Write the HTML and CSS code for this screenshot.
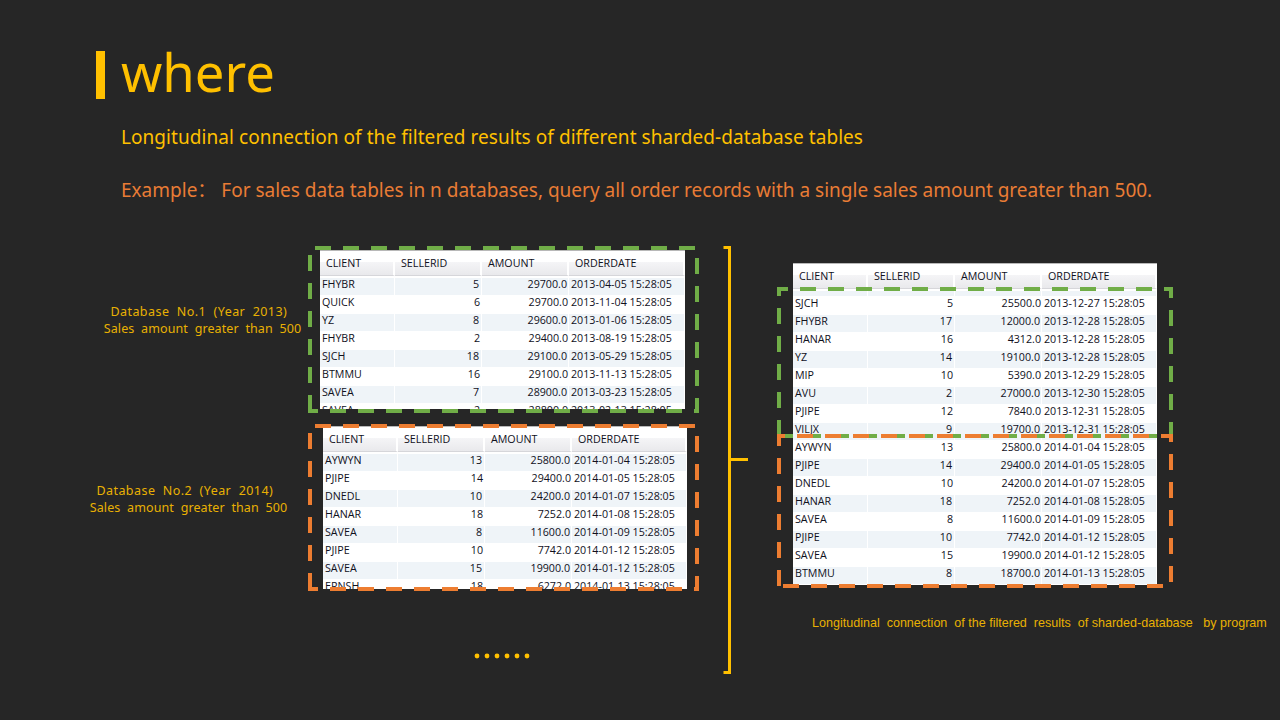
FILE: index.html
```html
<!DOCTYPE html>
<html lang="en">
<head>
<meta charset="utf-8">
<title>where</title>
<link rel="stylesheet" href="styles.css">
</head>
<body>
<main class="slide">
  <header class="head">
    <span class="head-bar"></span>
    <h1 class="title">where</h1>
  </header>
  <p class="sub">Longitudinal connection of the filtered results of different sharded-database tables</p>
  <p class="example">Example：&nbsp;For sales data tables in n databases, query all order records with a single sales amount greater than 500.</p>

  <p class="label label-a">Database&nbsp; No.1&nbsp; (Year&nbsp; 2013)&nbsp;&nbsp;<br>Sales&nbsp; amount&nbsp; greater&nbsp; than&nbsp; 500</p>
  <p class="label label-b">Database&nbsp; No.2&nbsp; (Year&nbsp; 2014)&nbsp;&nbsp;<br>Sales&nbsp; amount&nbsp; greater&nbsp; than&nbsp; 500</p>

  <section class="tbl tbl-a">
    <div class="row hdr"><span>CLIENT</span><span>SELLERID</span><span>AMOUNT</span><span>ORDERDATE</span></div>
    <div class="row"><span>FHYBR</span><span>5</span><span>29700.0</span><span>2013-04-05 15:28:05</span></div>
    <div class="row"><span>QUICK</span><span>6</span><span>29700.0</span><span>2013-11-04 15:28:05</span></div>
    <div class="row"><span>YZ</span><span>8</span><span>29600.0</span><span>2013-01-06 15:28:05</span></div>
    <div class="row"><span>FHYBR</span><span>2</span><span>29400.0</span><span>2013-08-19 15:28:05</span></div>
    <div class="row"><span>SJCH</span><span>18</span><span>29100.0</span><span>2013-05-29 15:28:05</span></div>
    <div class="row"><span>BTMMU</span><span>16</span><span>29100.0</span><span>2013-11-13 15:28:05</span></div>
    <div class="row"><span>SAVEA</span><span>7</span><span>28900.0</span><span>2013-03-23 15:28:05</span></div>
    <div class="row"><span>SAVEA</span><span>2</span><span>28800.0</span><span>2013-02-13 15:28:05</span></div>
  </section>

  <section class="tbl tbl-b">
    <div class="row hdr"><span>CLIENT</span><span>SELLERID</span><span>AMOUNT</span><span>ORDERDATE</span></div>
    <div class="row"><span>AYWYN</span><span>13</span><span>25800.0</span><span>2014-01-04 15:28:05</span></div>
    <div class="row"><span>PJIPE</span><span>14</span><span>29400.0</span><span>2014-01-05 15:28:05</span></div>
    <div class="row"><span>DNEDL</span><span>10</span><span>24200.0</span><span>2014-01-07 15:28:05</span></div>
    <div class="row"><span>HANAR</span><span>18</span><span>7252.0</span><span>2014-01-08 15:28:05</span></div>
    <div class="row"><span>SAVEA</span><span>8</span><span>11600.0</span><span>2014-01-09 15:28:05</span></div>
    <div class="row"><span>PJIPE</span><span>10</span><span>7742.0</span><span>2014-01-12 15:28:05</span></div>
    <div class="row"><span>SAVEA</span><span>15</span><span>19900.0</span><span>2014-01-12 15:28:05</span></div>
    <div class="row"><span>ERNSH</span><span>18</span><span>6272.0</span><span>2014-01-13 15:28:05</span></div>
  </section>

  <section class="tbl tbl-c">
    <div class="row hdr"><span>CLIENT</span><span>SELLERID</span><span>AMOUNT</span><span>ORDERDATE</span></div>
    <div class="row spacer"><span></span><span></span><span></span><span></span></div>
    <div class="row"><span>SJCH</span><span>5</span><span>25500.0</span><span>2013-12-27 15:28:05</span></div>
    <div class="row"><span>FHYBR</span><span>17</span><span>12000.0</span><span>2013-12-28 15:28:05</span></div>
    <div class="row"><span>HANAR</span><span>16</span><span>4312.0</span><span>2013-12-28 15:28:05</span></div>
    <div class="row"><span>YZ</span><span>14</span><span>19100.0</span><span>2013-12-28 15:28:05</span></div>
    <div class="row"><span>MIP</span><span>10</span><span>5390.0</span><span>2013-12-29 15:28:05</span></div>
    <div class="row"><span>AVU</span><span>2</span><span>27000.0</span><span>2013-12-30 15:28:05</span></div>
    <div class="row"><span>PJIPE</span><span>12</span><span>7840.0</span><span>2013-12-31 15:28:05</span></div>
    <div class="row"><span>VILJX</span><span>9</span><span>19700.0</span><span>2013-12-31 15:28:05</span></div>
    <div class="row"><span>AYWYN</span><span>13</span><span>25800.0</span><span>2014-01-04 15:28:05</span></div>
    <div class="row"><span>PJIPE</span><span>14</span><span>29400.0</span><span>2014-01-05 15:28:05</span></div>
    <div class="row"><span>DNEDL</span><span>10</span><span>24200.0</span><span>2014-01-07 15:28:05</span></div>
    <div class="row"><span>HANAR</span><span>18</span><span>7252.0</span><span>2014-01-08 15:28:05</span></div>
    <div class="row"><span>SAVEA</span><span>8</span><span>11600.0</span><span>2014-01-09 15:28:05</span></div>
    <div class="row"><span>PJIPE</span><span>10</span><span>7742.0</span><span>2014-01-12 15:28:05</span></div>
    <div class="row"><span>SAVEA</span><span>15</span><span>19900.0</span><span>2014-01-12 15:28:05</span></div>
    <div class="row"><span>BTMMU</span><span>8</span><span>18700.0</span><span>2014-01-13 15:28:05</span></div>
  </section>

  <svg class="overlay" width="1280" height="720" viewBox="0 0 1280 720" aria-hidden="true">
    <path class="dash green" d="M310 411V248H697V411Z"/>
    <path class="dash orange" d="M310 589V426H697V589Z"/>
    <path class="dash green" d="M779 436V289H1171V436Z"/>
    <path class="dash orange" d="M779 586V436H1171V586Z"/>
    <path class="brace" d="M723.5 247.5H729.5V672.5H723.5M729.5 459.5H748"/>
    <g class="dots">
      <circle cx="477" cy="656" r="2.4"/><circle cx="487" cy="656" r="2.4"/><circle cx="497" cy="656" r="2.4"/>
      <circle cx="507" cy="656" r="2.4"/><circle cx="517" cy="656" r="2.4"/><circle cx="527" cy="656" r="2.4"/>
    </g>
  </svg>

  <p class="result">Longitudinal&nbsp; connection&nbsp; of the filtered&nbsp; results&nbsp; of sharded-database&nbsp;&nbsp; by program</p>
</main>
</body>
</html>
```

FILE: styles.css
```css
* { box-sizing: border-box; }
html, body { margin: 0; padding: 0; }
body { background: #262626; }

.slide {
  position: relative;
  width: 1280px;
  height: 720px;
  overflow: hidden;
  background: #262626;
  font-family: "Noto Sans", "Noto Sans CJK SC", sans-serif;
}

.head { position: absolute; left: 96px; top: 42px; display: flex; align-items: center; gap: 16px; }
.head-bar { width: 9px; height: 48px; margin-top: 6px; background: #ffc000; }
.title { margin: 0; font-size: 52.6px; line-height: 60px; font-weight: 400; color: #ffc000; }

.sub, .example, .label, .result { margin: 0; position: absolute; white-space: nowrap; }
.sub { left: 121px; top: 124px; font-size: 19px; line-height: 26px; letter-spacing: .06px; color: #ffc000; }
.example { left: 121px; top: 177px; font-size: 19px; line-height: 26px; color: #e97c35; }

.label { font-size: 12.5px; line-height: 17px; letter-spacing: .1px; color: #ffc000; opacity: .9; text-align: center; }
.label::first-line { letter-spacing: .45px; }
.label-a { left: 98px; top: 303px; }
.label-b { left: 84px; top: 482px; }
.result { left: 812px; top: 615px; font-family: "Liberation Sans", Arial, sans-serif; font-size: 12.55px; line-height: 16px; color: #ffc000; opacity: .9; }

.tbl {
  position: absolute;
  overflow: hidden;
  background: #fff;
  border-top: 1px solid #b8b8b8;
  font-family: "Open Sans", "Noto Sans", sans-serif;
  font-size: 10.7px;
  color: #10101c;
}
.tbl-a { left: 320px; top: 250px; width: 365px; height: 159px; }
.tbl-b { left: 323px; top: 426px; width: 364px; height: 163px; }
.tbl-c { left: 793px; top: 263px; width: 364px; height: 322px; }

.row {
  display: grid;
  grid-template-columns: 75px 87px 87px 1fr;
  height: 18px;
  line-height: 13px;
  background: #fff;
}
.row:nth-child(even) { background: #eff4f8; }
.row:nth-child(even) span { border-bottom: 1px solid #fff; border-right: 1px solid #fff; }
.row span { white-space: nowrap; overflow: hidden; }
.row span:nth-child(1) { padding-left: 2px; }
.row span:nth-child(2), .row span:nth-child(3) { text-align: right; }
.row span:nth-child(2) { padding-right: 2px; }
.row span:nth-child(3) { padding-right: 1px; }
.row span:nth-child(4) { padding-left: 2px; }

.row.spacer { height: 6px; }

.row.hdr { height: 27px; line-height: 24px; background: #fff; }
.row.hdr span {
  height: 25px;
  padding: 0 0 0 6px;
  text-align: left;
  background: linear-gradient(#fff 0 45%, #f5f5f7 45%, #e9e9ec);
  border-right: 2px solid #fff;
  border-bottom: 1px solid #d6d6da;
}

.overlay { position: absolute; left: 0; top: 0; pointer-events: none; }
.dash { fill: none; stroke-width: 4; stroke-dasharray: 16 12; }
.green { stroke: #70ad47; }
.orange { stroke: #ed7d31; }
.brace { fill: none; stroke: #ffc000; stroke-width: 3; }
.dots circle { fill: #ffc000; }
```
